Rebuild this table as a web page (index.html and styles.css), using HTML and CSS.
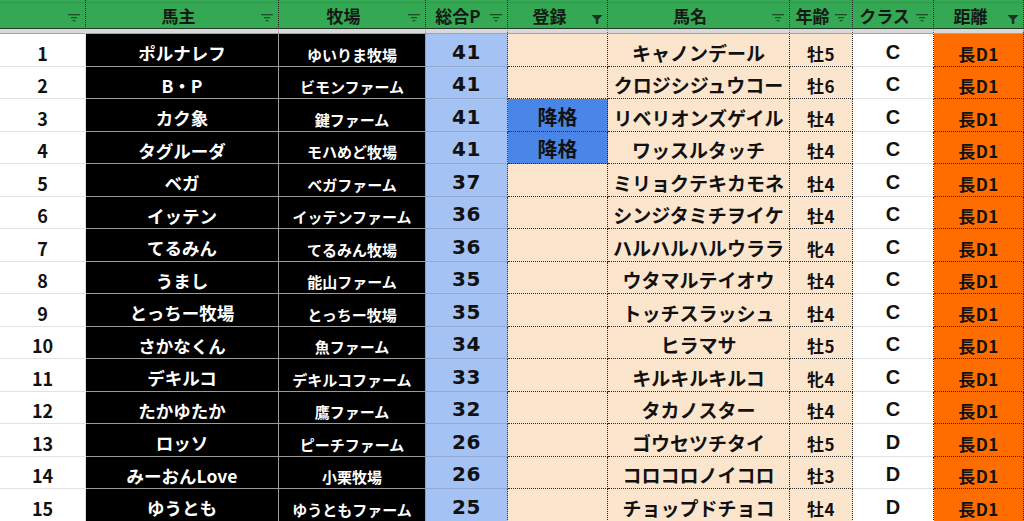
FILE: index.html
```html
<!DOCTYPE html>
<html lang="ja">
<head>
<meta charset="utf-8">
<title>ランキング</title>
<link rel="stylesheet" href="styles.css">
</head>
<body>
<table class="sheet">
  <colgroup>
    <col class="w-num"><col class="w-owner"><col class="w-farm"><col class="w-pts"><col class="w-reg"><col class="w-horse"><col class="w-age"><col class="w-cls"><col class="w-dist">
  </colgroup>
  <thead>
    <tr>
      <th><div class="hcell"><span class="hlabel"></span><svg class="fil" width="12" height="8" viewBox="0 0 12 8"><rect x="0" y="0" width="12" height="1.3"/><rect x="3" y="3" width="6" height="1.3"/><rect x="4.6" y="6" width="2.8" height="1.3"/></svg></div></th>
      <th class="h-owner"><div class="hcell"><span class="hlabel">馬主</span><svg class="fil" width="12" height="8" viewBox="0 0 12 8"><rect x="0" y="0" width="12" height="1.3"/><rect x="3" y="3" width="6" height="1.3"/><rect x="4.6" y="6" width="2.8" height="1.3"/></svg></div></th>
      <th><div class="hcell"><span class="hlabel">牧場</span><svg class="fil" width="12" height="8" viewBox="0 0 12 8"><rect x="0" y="0" width="12" height="1.3"/><rect x="3" y="3" width="6" height="1.3"/><rect x="4.6" y="6" width="2.8" height="1.3"/></svg></div></th>
      <th><div class="hcell"><span class="hlabel">総合P</span><svg class="fil" width="12" height="8" viewBox="0 0 12 8"><rect x="0" y="0" width="12" height="1.3"/><rect x="3" y="3" width="6" height="1.3"/><rect x="4.6" y="6" width="2.8" height="1.3"/></svg></div></th>
      <th><div class="hcell"><span class="hlabel">登録</span><svg class="fil on" width="12" height="9" viewBox="0 0 12 9"><polygon points="0.5,0 11.5,0 7.2,4.5 7.2,9 4.8,9 4.8,4.5"/></svg></div></th>
      <th><div class="hcell"><span class="hlabel">馬名</span><svg class="fil" width="12" height="8" viewBox="0 0 12 8"><rect x="0" y="0" width="12" height="1.3"/><rect x="3" y="3" width="6" height="1.3"/><rect x="4.6" y="6" width="2.8" height="1.3"/></svg></div></th>
      <th><div class="hcell"><span class="hlabel">年齢</span><svg class="fil" width="12" height="8" viewBox="0 0 12 8"><rect x="0" y="0" width="12" height="1.3"/><rect x="3" y="3" width="6" height="1.3"/><rect x="4.6" y="6" width="2.8" height="1.3"/></svg></div></th>
      <th><div class="hcell"><span class="hlabel">クラス</span><svg class="fil" width="12" height="8" viewBox="0 0 12 8"><rect x="0" y="0" width="12" height="1.3"/><rect x="3" y="3" width="6" height="1.3"/><rect x="4.6" y="6" width="2.8" height="1.3"/></svg></div></th>
      <th><div class="hcell"><span class="hlabel">距離</span><svg class="fil on" width="12" height="9" viewBox="0 0 12 9"><polygon points="0.5,0 11.5,0 7.2,4.5 7.2,9 4.8,9 4.8,4.5"/></svg></div></th>
    </tr>
  </thead>
  <tbody>
    <tr><td class="num">1</td><td class="owner">ポルナレフ</td><td class="farm">ゆいりま牧場</td><td class="pts">41</td><td class="reg"></td><td class="horse">キャノンデール</td><td class="age">牡5</td><td class="cls">C</td><td class="dist">長D1</td></tr>
    <tr><td class="num">2</td><td class="owner">B・P</td><td class="farm">ビモンファーム</td><td class="pts">41</td><td class="reg"></td><td class="horse">クロジシジュウコー</td><td class="age">牡6</td><td class="cls">C</td><td class="dist">長D1</td></tr>
    <tr><td class="num">3</td><td class="owner">カク象</td><td class="farm">鍵ファーム</td><td class="pts">41</td><td class="reg demote">降格</td><td class="horse">リベリオンズゲイル</td><td class="age">牡4</td><td class="cls">C</td><td class="dist">長D1</td></tr>
    <tr><td class="num">4</td><td class="owner">タグルーダ</td><td class="farm">モハめど牧場</td><td class="pts">41</td><td class="reg demote">降格</td><td class="horse">ワッスルタッチ</td><td class="age">牡4</td><td class="cls">C</td><td class="dist">長D1</td></tr>
    <tr><td class="num">5</td><td class="owner">ベガ</td><td class="farm">ベガファーム</td><td class="pts">37</td><td class="reg"></td><td class="horse">ミリョクテキカモネ</td><td class="age">牡4</td><td class="cls">C</td><td class="dist">長D1</td></tr>
    <tr><td class="num">6</td><td class="owner">イッテン</td><td class="farm">イッテンファーム</td><td class="pts">36</td><td class="reg"></td><td class="horse">シンジタミチヲイケ</td><td class="age">牡4</td><td class="cls">C</td><td class="dist">長D1</td></tr>
    <tr><td class="num">7</td><td class="owner">てるみん</td><td class="farm">てるみん牧場</td><td class="pts">36</td><td class="reg"></td><td class="horse">ハルハルハルウララ</td><td class="age">牝4</td><td class="cls">C</td><td class="dist">長D1</td></tr>
    <tr><td class="num">8</td><td class="owner">うまし</td><td class="farm">能山ファーム</td><td class="pts">35</td><td class="reg"></td><td class="horse">ウタマルテイオウ</td><td class="age">牡4</td><td class="cls">C</td><td class="dist">長D1</td></tr>
    <tr><td class="num">9</td><td class="owner">とっちー牧場</td><td class="farm">とっちー牧場</td><td class="pts">35</td><td class="reg"></td><td class="horse">トッチスラッシュ</td><td class="age">牡4</td><td class="cls">C</td><td class="dist">長D1</td></tr>
    <tr><td class="num">10</td><td class="owner">さかなくん</td><td class="farm">魚ファーム</td><td class="pts">34</td><td class="reg"></td><td class="horse">ヒラマサ</td><td class="age">牡5</td><td class="cls">C</td><td class="dist">長D1</td></tr>
    <tr><td class="num">11</td><td class="owner">デキルコ</td><td class="farm">デキルコファーム</td><td class="pts">33</td><td class="reg"></td><td class="horse">キルキルキルコ</td><td class="age">牝4</td><td class="cls">C</td><td class="dist">長D1</td></tr>
    <tr><td class="num">12</td><td class="owner">たかゆたか</td><td class="farm">鷹ファーム</td><td class="pts">32</td><td class="reg"></td><td class="horse">タカノスター</td><td class="age">牡4</td><td class="cls">C</td><td class="dist">長D1</td></tr>
    <tr><td class="num">13</td><td class="owner">ロッソ</td><td class="farm">ピーチファーム</td><td class="pts">26</td><td class="reg"></td><td class="horse">ゴウセツチタイ</td><td class="age">牡5</td><td class="cls">D</td><td class="dist">長D1</td></tr>
    <tr><td class="num">14</td><td class="owner">みーおんLove</td><td class="farm">小栗牧場</td><td class="pts">26</td><td class="reg"></td><td class="horse">コロコロノイコロ</td><td class="age">牡3</td><td class="cls">D</td><td class="dist">長D1</td></tr>
    <tr><td class="num">15</td><td class="owner">ゆうとも</td><td class="farm">ゆうともファーム</td><td class="pts">25</td><td class="reg"></td><td class="horse">チョップドチョコ</td><td class="age">牡4</td><td class="cls">D</td><td class="dist">長D1</td></tr>
  </tbody>
</table>
</body>
</html>
```

FILE: styles.css
```css
html, body {
  margin: 0;
  padding: 0;
  background: #ffffff;
  overflow: hidden;
}

.sheet {
  border-collapse: separate;
  border-spacing: 0;
  table-layout: fixed;
  width: 1024px;
  font-family: "Noto Sans CJK JP", "Noto Sans", sans-serif;
  font-weight: 700;
  color: #111111;
}

.w-num { width: 86px; }
.w-owner { width: 193px; }
.w-farm { width: 147px; }
.w-pts { width: 82px; }
.w-reg { width: 100px; }
.w-horse { width: 182px; }
.w-age { width: 63px; }
.w-cls { width: 81px; }
.w-dist { width: 90px; }

/* header */
.sheet th {
  box-sizing: border-box;
  height: 29px;
  padding: 0;
  background: #34a853;
  border-right: 1px dotted #1d2b21;
  border-bottom: 1px solid #263a2c;
  box-shadow: inset 0 2px 0 #34a853, inset 0 3px 0 #2e9a4b;
  font-size: 17px;
  font-weight: 700;
  color: #131a15;
}

.hcell {
  display: flex;
  align-items: center;
  height: 28px;
}

.hlabel {
  flex: 1;
  text-align: center;
  line-height: 1;
  padding-top: 2px;
  white-space: nowrap;
}

.h-owner .hlabel { padding-left: 10px; }

.fil {
  flex: none;
  align-self: flex-end;
  margin: 0 5px 6px 0;
  fill: #1e4f2b;
}

.fil.on {
  fill: #173321;
  margin-bottom: 4px;
  margin-right: 4px;
}

/* body cells */
.sheet td {
  box-sizing: border-box;
  height: 32.5px;
  padding: 0 0 4px 0;
  line-height: 1;
  text-align: center;
  vertical-align: bottom;
  white-space: nowrap;
  overflow: hidden;
  border-right: 1px solid #e2e2e2;
  border-bottom: 1px solid #e2e2e2;
}

.sheet tbody tr:first-child td {
  height: 37.5px;
  border-top: 4px solid #d9d9d9;
  box-shadow: inset 0 1px 0 #a3a3a3;
}

.num {
  background: #ffffff;
  font-size: 18px;
  color: #111111;
}

.owner, .farm {
  background: #000000;
  color: #ffffff;
}

.sheet td.owner,
.sheet td.farm {
  border-right: 1px solid #9b9b9b;
  border-bottom: 1px solid #9b9b9b;
}

.owner { font-size: 17.5px; }

.farm {
  font-size: 15px;
  padding-bottom: 3px;
}

.pts {
  background: #a4c2f4;
  font-family: "DejaVu Sans", "Noto Sans", sans-serif;
  font-size: 20px;
  letter-spacing: 0.5px;
  color: #111111;
}

.sheet td.pts {
  border-right: 1px dotted #333333;
  border-bottom: 1px solid #93aad3;
}

.reg, .horse, .age {
  background: #fce5cd;
}

.sheet td.reg,
.sheet td.horse,
.sheet td.age,
.sheet td.dist {
  border-right: 1px dotted #2a2a2a;
  border-bottom: 1px dotted #2a2a2a;
}

.reg {
  font-size: 20px;
  padding-bottom: 3px;
}

.reg.demote {
  background: #4a86e8;
  color: #111111;
}

.horse {
  font-size: 19px;
}

.age {
  font-size: 17px;
  letter-spacing: 0.5px;
  padding-bottom: 3px;
}

.cls {
  background: #ffffff;
  font-family: "Liberation Sans", Arial, sans-serif;
  font-size: 20px;
  padding-bottom: 7px;
}

.sheet td.cls {
  border-right: 1px dotted #2a2a2a;
}

.dist {
  background: #ff6d01;
  font-size: 17px;
  letter-spacing: 0.5px;
  padding-bottom: 3px;
}
```
